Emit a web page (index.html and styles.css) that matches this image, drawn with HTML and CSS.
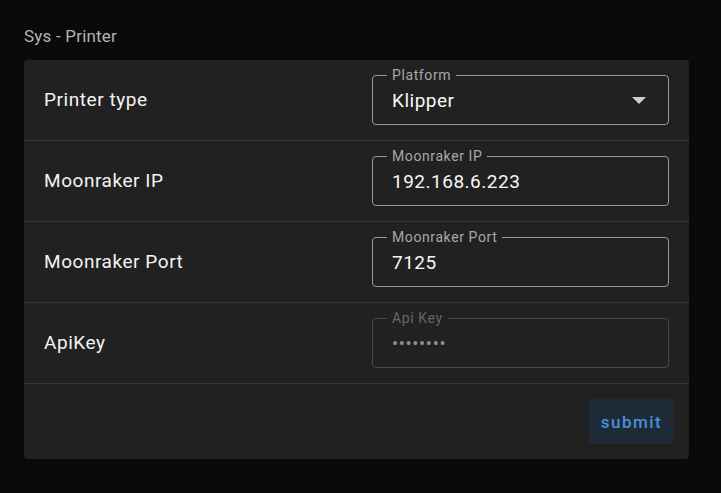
FILE: index.html
```html
<!DOCTYPE html>
<html lang="en">
<head>
<meta charset="utf-8">
<title>Sys - Printer</title>
<link rel="stylesheet" href="styles.css">
</head>
<body>
<main class="page">
  <h1 class="title">Sys - Printer</h1>
  <section class="card">
    <div class="row">
      <div class="row-label">Printer type</div>
      <fieldset class="field">
        <legend class="field-label">Platform</legend>
        <div class="field-body">
          <span class="field-value">Klipper</span>
          <svg class="arrow" width="14" height="7" viewBox="0 0 14 7"><polygon points="0,0 14,0 7,7" fill="#cfcfcf"/></svg>
        </div>
      </fieldset>
    </div>
    <div class="row">
      <div class="row-label">Moonraker IP</div>
      <fieldset class="field">
        <legend class="field-label">Moonraker IP</legend>
        <div class="field-body"><span class="field-value">192.168.6.223</span></div>
      </fieldset>
    </div>
    <div class="row">
      <div class="row-label">Moonraker Port</div>
      <fieldset class="field">
        <legend class="field-label">Moonraker Port</legend>
        <div class="field-body"><span class="field-value">7125</span></div>
      </fieldset>
    </div>
    <div class="row">
      <div class="row-label">ApiKey</div>
      <fieldset class="field field-disabled">
        <legend class="field-label">Api Key</legend>
        <div class="field-body"><span class="field-value dots">••••••••</span></div>
      </fieldset>
    </div>
    <div class="actions">
      <button class="submit" type="button">submit</button>
    </div>
  </section>
</main>
</body>
</html>
```

FILE: styles.css
```css
* { box-sizing: border-box; }
html, body {
  margin: 0;
  background: #0a0a0a;
  font-family: Roboto, "Noto Sans", "Liberation Sans", sans-serif;
}
.page {
  padding: 24px 32px 0 24px;
}
.title {
  margin: 0 0 12px;
  font-size: 17px;
  line-height: 24px;
  font-weight: 400;
  letter-spacing: 0.2px;
  color: #b4b4b4;
}
.card {
  width: 665px;
  background: #212121;
  border-radius: 4px;
}
.row {
  display: flex;
  align-items: flex-start;
  height: 81px;
  padding: 7px 20px 0 20px;
  border-bottom: 1px solid #363636;
}
.row-label {
  flex: 1;
  align-self: center;
  margin-top: -8px;
  font-size: 19px;
  letter-spacing: 0.55px;
  color: #f3f3f3;
}
.field {
  width: 297px;
  margin: 0;
  padding: 0 19px 7px 19px;
  min-width: 0;
  border: 1px solid #9a9a9a;
  border-radius: 4px;
}
.field-label {
  font-size: 14px;
  line-height: 16px;
  letter-spacing: 0.6px;
  padding: 0 5px;
  margin-left: -5px;
  color: #a8a8a8;
}
.field-body {
  display: flex;
  align-items: center;
  justify-content: space-between;
  height: 34px;
}
.field-value {
  font-size: 19px;
  letter-spacing: 0.5px;
  color: #f7f7f7;
}
.arrow {
  margin-right: 3px;
}
.field-disabled {
  border-color: #4a4a4a;
}
.field-disabled .field-label {
  color: #666;
}
.dots {
  font-size: 18px;
  letter-spacing: 0.7px;
  color: #8e8e8e;
}
.actions {
  display: flex;
  justify-content: flex-end;
  padding: 15px 15px 15px;
}
.submit {
  width: 85px;
  height: 45px;
  border: 0;
  border-radius: 4px;
  background: #1f2a37;
  color: #4a8fda;
  font-family: Roboto, "Noto Sans", sans-serif;
  font-size: 17px;
  font-weight: 500;
  letter-spacing: 1.5px;
  padding: 0;
}
```
